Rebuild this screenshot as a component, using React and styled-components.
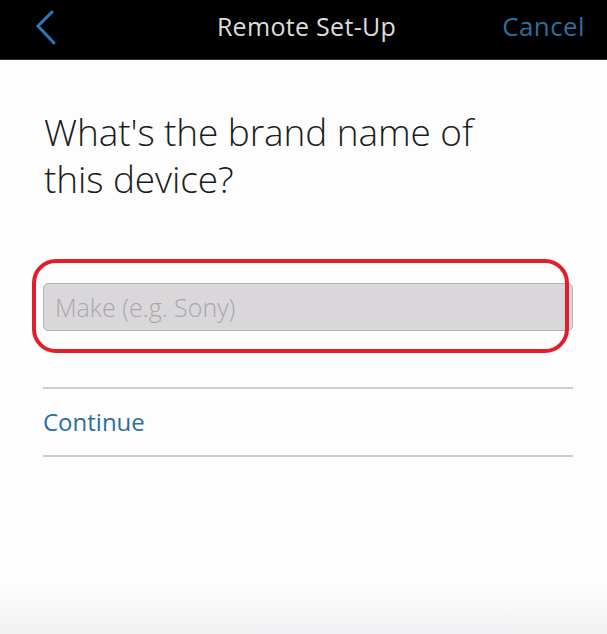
import React from "react";
import styled, { createGlobalStyle } from "styled-components";

const GlobalStyle = createGlobalStyle`
  html, body {
    margin: 0;
    padding: 0;
    background: #fdfdfd;
  }
  body {
    font-family: "Open Sans", "Liberation Sans", sans-serif;
  }
`

const Screen = styled.div`
  width: 607px;
  height: 634px;
  display: flex;
  flex-direction: column;
  overflow: hidden;
  background: linear-gradient(to bottom, #fdfdfd 0%, #fdfdfd 92%, #f1f1f3 100%);
`

const NavBar = styled.div`
  height: 60px;
  box-sizing: border-box;
  background: #000;
  display: grid;
  grid-template-columns: 1fr auto 1fr;
  align-items: center;
  padding: 0 22px 8px 30px;
  border-bottom: 1px solid #2a2a2a;
`

const BackButton = styled.div`
  display: flex;
  align-items: center;
`

const NavTitle = styled.div`
  color: #dcdcdc;
  font-size: 25px;
  font-weight: 400;
  letter-spacing: 0.3px;
  padding-right: 2px;
`

const NavAction = styled.div`
  justify-self: end;
  color: #2e6d9e;
  font-size: 26px;
  font-weight: 400;
  letter-spacing: 0.4px;
`

const Body = styled.div`
  flex: 1;
  padding: 0 34px 0 43px;
  display: flex;
  flex-direction: column;
`

const Question = styled.h1`
  margin: 48px 0 0 1px;
  font-size: 37px;
  font-weight: 300;
  line-height: 47px;
  color: #1c1c1c;
  letter-spacing: -0.1px;
`

const FieldWrap = styled.div`
  position: relative;
  margin-top: 81px;
`

const MakeInput = styled.input`
  box-sizing: border-box;
  width: 100%;
  height: 48px;
  background: #d9d7da;
  border: 1px solid #b2b2b4;
  border-radius: 5px;
  padding: 0 11px;
  font-family: "Open Sans", "Liberation Sans", sans-serif;
  font-size: 25px;
  font-weight: 300;
  color: #333;
  outline: none;
  &::placeholder {
    color: #a9a7aa;
  }
`

const Highlight = styled.div`
  position: absolute;
  left: -11px;
  top: -24px;
  width: 537px;
  height: 94px;
  box-sizing: border-box;
  border: 4px solid #e31e2a;
  border-radius: 24px;
  pointer-events: none;
`

const Divider = styled.div`
  height: 2px;
  background: #cdcdcd;
`

const ContinueRow = styled.div`
  margin-top: 56px;
  display: flex;
  flex-direction: column;
`

const ContinueLink = styled.div`
  color: #2e6d9e;
  font-size: 24px;
  font-weight: 400;
  padding: 16px 0 16px;
  line-height: 34px;
`

export default function App() {
  return (
    <>
      <GlobalStyle />
      <Screen>
        <NavBar>
          <BackButton>
            <svg width="30" height="40" viewBox="0 0 30 40">
              <polyline
                points="22,6 8,20 24,37"
                fill="none"
                stroke="#2f78b4"
                strokeWidth="3"
                strokeLinecap="round"
                strokeLinejoin="miter"
              />
            </svg>
          </BackButton>
          <NavTitle>Remote Set-Up</NavTitle>
          <NavAction>Cancel</NavAction>
        </NavBar>
        <Body>
          <Question>
            What's the brand name of
            <br />
            this device?
          </Question>
          <FieldWrap>
            <MakeInput placeholder="Make (e.g. Sony)" />
            <Highlight />
          </FieldWrap>
          <ContinueRow>
            <Divider />
            <ContinueLink>Continue</ContinueLink>
            <Divider />
          </ContinueRow>
        </Body>
      </Screen>
    </>
  );
}
